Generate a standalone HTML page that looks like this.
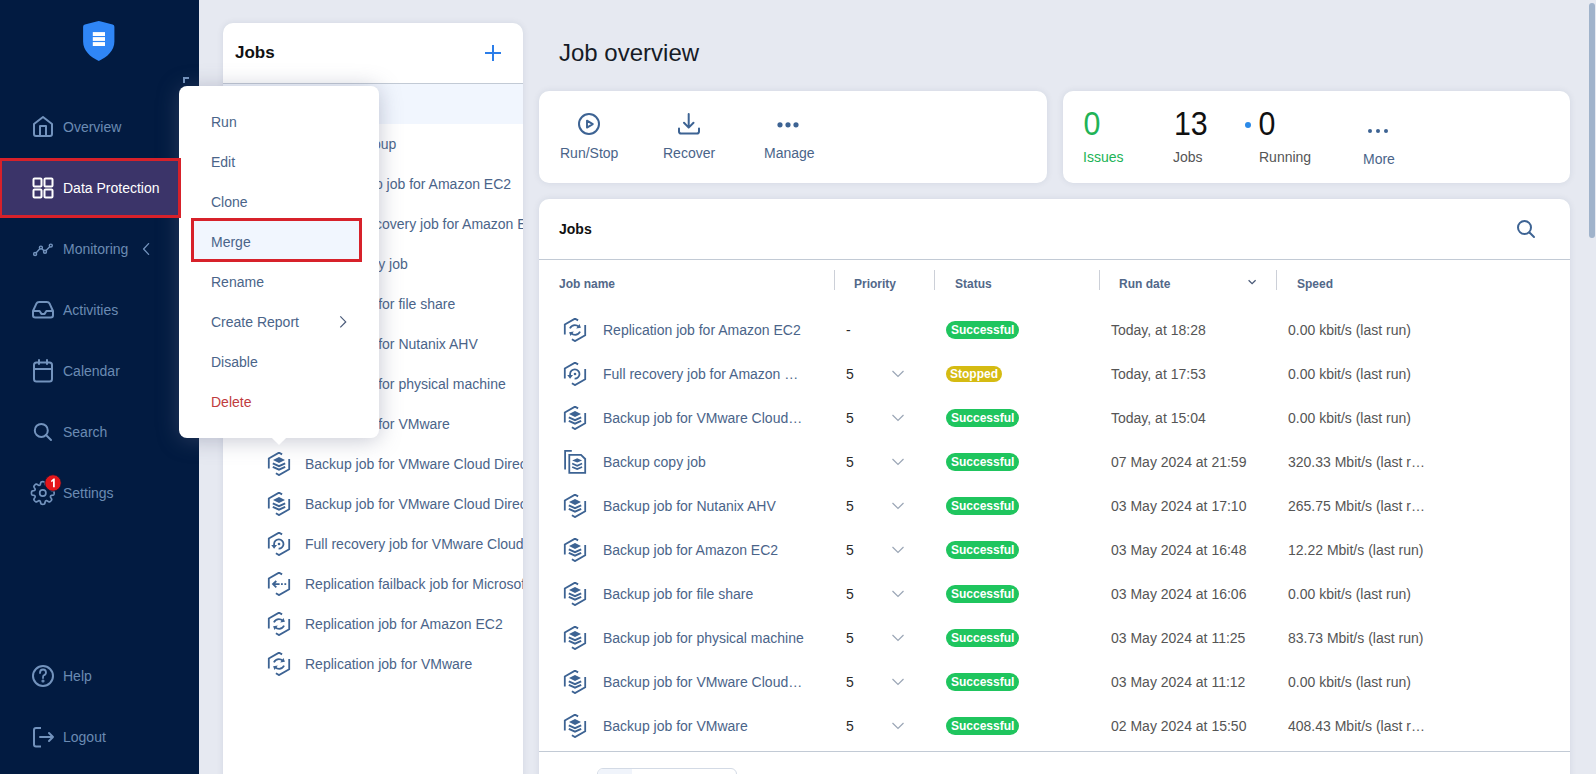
<!DOCTYPE html>
<html><head><meta charset="utf-8">
<style>
*{box-sizing:border-box;margin:0;padding:0}
html,body{width:1596px;height:774px;overflow:hidden;background:#e6e9f1;font-family:"Liberation Sans",sans-serif;position:relative}
.abs{position:absolute}
.side{position:absolute;left:0;top:0;width:199px;height:774px;background:#021b41}
.nav{position:absolute;left:0;width:199px;height:20px;color:#6b8bb3;font-size:14px;line-height:20px}
.nav .t{position:absolute;left:63px;top:0;white-space:nowrap}
.nav svg{position:absolute;left:31px;top:-2px}
.panel{position:absolute;background:#fff;border-radius:10px;box-shadow:0 0 7px rgba(20,40,80,.09)}
.li{position:absolute;left:0;width:300px;height:40px;font-size:14px;color:#4a6489;white-space:nowrap;overflow:hidden}
.li .t{position:absolute;left:82px;top:11px;line-height:18px}
.li svg{position:absolute;left:44px;top:8px}
.menu{position:absolute;left:179px;top:86px;width:200px;height:352px;background:#fff;border-radius:8px;box-shadow:0 2px 22px rgba(100,105,135,.38)}
.mi{position:absolute;left:32px;font-size:14px;color:#4a6489;line-height:18px}
.th{position:absolute;top:277px;font-size:12px;font-weight:bold;color:#526889;line-height:14px;white-space:nowrap}
.sep{position:absolute;top:270px;width:1px;height:20px;background:#ccd0d8}
.row{position:absolute;left:539px;width:1031px;height:44px}
.row .n{position:absolute;left:64px;top:13px;font-size:14px;color:#4a6489;line-height:18px;white-space:nowrap}
.row .p{position:absolute;left:307px;top:13px;font-size:14px;color:#2a2a2a;line-height:18px}
.row .ch{position:absolute;left:352px;top:17px}
.row .b{position:absolute;left:407px;top:13px;height:18px;border-radius:9px;background:#1fc55e;color:#fff;font-size:12px;font-weight:bold;line-height:18px;padding:0 5px 0 5px}
.row .d{position:absolute;left:572px;top:13px;font-size:14px;color:#555;line-height:18px;white-space:nowrap}
.row .s{position:absolute;left:749px;top:13px;font-size:14px;color:#555;line-height:18px;white-space:nowrap}
.row svg.ic{position:absolute;left:24px;top:10px}
.lbl{font-size:14px;color:#4a6489;line-height:18px;white-space:nowrap}
.big{font-size:32px;line-height:36px;transform:scale(0.95,1.04);transform-origin:50% 60%}
.row .b.y{background:#d5bb12;top:14px;height:16px;line-height:16px;padding:0 4px 0 4px;border-radius:8px}
</style></head><body>

<!-- SIDEBAR -->
<div class="side">
  <svg class="abs" style="left:83px;top:20px" width="32" height="42" viewBox="0 0 32 42">
    <path d="M15.8 1.1 Q16.3 1.1 17 1.3 L29.6 4.5 Q31.4 5 31.4 6.8 V21.5 C31.4 30.5 24.5 37 15.8 40.9 C7.1 37 0.1 30.5 0.1 21.5 V6.8 Q0.1 5 1.9 4.5 L14.6 1.3 Q15.3 1.1 15.8 1.1 Z" fill="#2f86f6"/>
    <rect x="9.8" y="12.1" width="12.2" height="3.9" fill="#fff"/><rect x="9.8" y="17.1" width="12.2" height="3.8" fill="#fff"/><rect x="9.8" y="22.1" width="12.2" height="3.9" fill="#fff"/>
  </svg>

  <svg class="abs" style="left:0;top:0" width="199" height="774" viewBox="0 0 199 774" fill="none" stroke="#7393bd" stroke-width="2" stroke-linecap="round" stroke-linejoin="round">
    <!-- corner mark -->
    <path d="M184 83 V78 H189" stroke-linecap="butt" stroke-linejoin="miter"/>
    <!-- house -->
    <path d="M34 124 L43 117 L52 124 V134 Q52 136 50 136 H36 Q34 136 34 134 Z"/>
    <path d="M40 136 V126 H46 V136"/>
    <!-- monitoring -->
    <g stroke-width="1.4"><circle cx="35.1" cy="254" r="1.5"/><circle cx="40.9" cy="247.6" r="1.5"/><circle cx="45" cy="251.8" r="1.5"/><circle cx="50.8" cy="245.6" r="1.5"/>
    <path d="M36.2 252.8 L39.8 248.8 M42 248.7 L43.9 250.7 M46.1 250.6 L49.7 246.8"/></g>
    <path d="M148.6 243.6 L143.6 249 L148.6 254.4" stroke-width="1.3"/>
    <!-- activities -->
    <path d="M33 311 L36.3 303.8 Q37.2 302 39.2 302 H46.8 Q48.8 302 49.7 303.8 L53 311 V315.3 Q53 317.6 50.7 317.6 H35.3 Q33 317.6 33 315.3 Z M33 311 H39.6 L41.4 313.9 H44.6 L46.4 311 H53"/>
    <!-- calendar -->
    <rect x="34" y="362.5" width="18" height="19" rx="2.5"/>
    <path d="M34 369 H52 M39 360 V364 M47 360 V364"/>
    <!-- search -->
    <circle cx="41.3" cy="430.4" r="6.5"/><path d="M46 435 L51 440"/>
    <!-- gear -->
    <path d="M42.80 481.70 L43.10 481.71 L43.39 481.73 L43.68 481.76 L43.97 481.83 L44.26 481.93 L44.52 482.12 L44.76 482.45 L44.94 482.94 L45.07 483.55 L45.18 484.11 L45.31 484.54 L45.46 484.82 L45.63 485.01 L45.82 485.14 L46.01 485.24 L46.22 485.31 L46.45 485.35 L46.70 485.34 L47.01 485.24 L47.40 485.03 L47.88 484.71 L48.40 484.38 L48.88 484.16 L49.27 484.09 L49.59 484.15 L49.87 484.27 L50.12 484.43 L50.35 484.61 L50.58 484.80 L50.79 485.01 L51.00 485.22 L51.19 485.45 L51.37 485.68 L51.53 485.93 L51.65 486.21 L51.71 486.53 L51.64 486.92 L51.42 487.40 L51.09 487.92 L50.77 488.40 L50.56 488.79 L50.46 489.10 L50.45 489.35 L50.49 489.58 L50.56 489.79 L50.66 489.98 L50.79 490.17 L50.98 490.34 L51.26 490.49 L51.69 490.62 L52.25 490.73 L52.86 490.86 L53.35 491.04 L53.68 491.28 L53.87 491.54 L53.97 491.83 L54.04 492.12 L54.07 492.41 L54.09 492.70 L54.10 493.00 L54.09 493.30 L54.07 493.59 L54.04 493.88 L53.97 494.17 L53.87 494.46 L53.68 494.72 L53.35 494.96 L52.86 495.14 L52.25 495.27 L51.69 495.38 L51.26 495.51 L50.98 495.66 L50.79 495.83 L50.66 496.02 L50.56 496.21 L50.49 496.42 L50.45 496.65 L50.46 496.90 L50.56 497.21 L50.77 497.60 L51.09 498.08 L51.42 498.60 L51.64 499.08 L51.71 499.47 L51.65 499.79 L51.53 500.07 L51.37 500.32 L51.19 500.55 L51.00 500.78 L50.79 500.99 L50.58 501.20 L50.35 501.39 L50.12 501.57 L49.87 501.73 L49.59 501.85 L49.27 501.91 L48.88 501.84 L48.40 501.62 L47.88 501.29 L47.40 500.97 L47.01 500.76 L46.70 500.66 L46.45 500.65 L46.22 500.69 L46.01 500.76 L45.82 500.86 L45.63 500.99 L45.46 501.18 L45.31 501.46 L45.18 501.89 L45.07 502.45 L44.94 503.06 L44.76 503.55 L44.52 503.88 L44.26 504.07 L43.97 504.17 L43.68 504.24 L43.39 504.27 L43.10 504.29 L42.80 504.30 L42.50 504.29 L42.21 504.27 L41.92 504.24 L41.63 504.17 L41.34 504.07 L41.08 503.88 L40.84 503.55 L40.66 503.06 L40.53 502.45 L40.42 501.89 L40.29 501.46 L40.14 501.18 L39.97 500.99 L39.78 500.86 L39.59 500.76 L39.38 500.69 L39.15 500.65 L38.90 500.66 L38.59 500.76 L38.20 500.97 L37.72 501.29 L37.20 501.62 L36.72 501.84 L36.33 501.91 L36.01 501.85 L35.73 501.73 L35.48 501.57 L35.25 501.39 L35.02 501.20 L34.81 500.99 L34.60 500.78 L34.41 500.55 L34.23 500.32 L34.07 500.07 L33.95 499.79 L33.89 499.47 L33.96 499.08 L34.18 498.60 L34.51 498.08 L34.83 497.60 L35.04 497.21 L35.14 496.90 L35.15 496.65 L35.11 496.42 L35.04 496.21 L34.94 496.02 L34.81 495.83 L34.62 495.66 L34.34 495.51 L33.91 495.38 L33.35 495.27 L32.74 495.14 L32.25 494.96 L31.92 494.72 L31.73 494.46 L31.63 494.17 L31.56 493.88 L31.53 493.59 L31.51 493.30 L31.50 493.00 L31.51 492.70 L31.53 492.41 L31.56 492.12 L31.63 491.83 L31.73 491.54 L31.92 491.28 L32.25 491.04 L32.74 490.86 L33.35 490.73 L33.91 490.62 L34.34 490.49 L34.62 490.34 L34.81 490.17 L34.94 489.98 L35.04 489.79 L35.11 489.58 L35.15 489.35 L35.14 489.10 L35.04 488.79 L34.83 488.40 L34.51 487.92 L34.18 487.40 L33.96 486.92 L33.89 486.53 L33.95 486.21 L34.07 485.93 L34.23 485.68 L34.41 485.45 L34.60 485.22 L34.81 485.01 L35.02 484.80 L35.25 484.61 L35.48 484.43 L35.73 484.27 L36.01 484.15 L36.33 484.09 L36.72 484.16 L37.20 484.38 L37.72 484.71 L38.20 485.03 L38.59 485.24 L38.90 485.34 L39.15 485.35 L39.38 485.31 L39.59 485.24 L39.78 485.14 L39.97 485.01 L40.14 484.82 L40.29 484.54 L40.42 484.11 L40.53 483.55 L40.66 482.94 L40.84 482.45 L41.08 482.12 L41.34 481.93 L41.63 481.83 L41.92 481.76 L42.21 481.73 L42.50 481.71 Z" stroke-width="1.7"/><circle cx="42.8" cy="493" r="3.1" stroke-width="1.7"/>
    <!-- help -->
    <circle cx="43" cy="676" r="10"/>
    <path d="M40 673 Q40 669.5 43 669.5 Q46 669.5 46 672.5 Q46 674.5 43.5 675.5 Q43 676 43 678" stroke-width="1.8"/>
    <circle cx="43" cy="681" r="0.6" fill="#7393bd"/>
    <!-- logout -->
    <path d="M41 728 H36 Q34 728 34 730 V744.5 Q34 746.5 36 746.5 H41" stroke-linecap="butt"/>
    <path d="M40 737 H53 M49 733 L53 737 L49 741"/>
  </svg>
  <svg class="abs" style="left:44px;top:474px" width="18" height="18" viewBox="0 0 18 18"><circle cx="9" cy="9" r="8.2" fill="#e5161b" stroke="#0d1a3a" stroke-width="0.8"/><path d="M7.2 6.6 L9.6 4.6 H10.8 V13.2 H9 V7.2 L7.2 8.2 Z" fill="#fff"/></svg>
  <div class="abs" style="left:0;top:158px;width:181px;height:60px;background:#3b3469;border:3px solid #d7212a;border-left-width:2px;z-index:5"></div>
  <svg class="abs" style="left:0;top:0;z-index:6" width="199" height="774" viewBox="0 0 199 774" fill="none" stroke="#fff" stroke-width="2">
    <rect x="33.5" y="178.5" width="8" height="8" rx="1"/><rect x="44.5" y="178.5" width="8" height="8" rx="1"/>
    <rect x="33.5" y="189.5" width="8" height="8" rx="1"/><rect x="44.5" y="189.5" width="8" height="8" rx="1"/>
  </svg>
  <div class="nav" style="top:117px"><span class="t">Overview</span></div>
  <div class="nav" style="top:178px;color:#fff;z-index:6;width:170px"><span class="t">Data Protection</span></div>
  <div class="nav" style="top:239px"><span class="t">Monitoring</span></div>
  <div class="nav" style="top:300px"><span class="t">Activities</span></div>
  <div class="nav" style="top:361px"><span class="t">Calendar</span></div>
  <div class="nav" style="top:422px"><span class="t">Search</span></div>
  <div class="nav" style="top:483px"><span class="t">Settings</span></div>
  <div class="nav" style="top:666px"><span class="t">Help</span></div>
  <div class="nav" style="top:727px"><span class="t">Logout</span></div>
</div>


<svg width="0" height="0" style="position:absolute">
 <defs>
  <g id="hex" fill="none" stroke-width="1.8" stroke-linecap="butt" stroke-linejoin="miter">
   <path d="M1.8 16.5 V6.4 L12 0.6 L15.1 2.4"/>
   <path d="M22.2 7.0 V17.2 L12 23.1 L8.9 21.3"/>
  </g>
  <symbol id="i-backup" viewBox="0 0 24 24"><g stroke="currentColor"><use href="#hex"/></g>
   <path d="M6 8 L12 5.1 L18 8 L12 10.9 Z" fill="currentColor"/>
   <path d="M5.8 11.3 L12 14.1 L18.2 11.3 M5.8 14.9 L12 17.7 L18.2 14.9" fill="none" stroke="currentColor" stroke-width="1.9"/>
  </symbol>
  <symbol id="i-repl" viewBox="0 0 24 24"><g stroke="currentColor"><use href="#hex"/></g>
   <path d="M6.9 10.3 Q8.6 7.1 11.8 7.1 Q14.2 7.1 15.6 8.6" fill="none" stroke="currentColor" stroke-width="1.8"/>
   <path d="M13.2 10.6 L16.5 5.9 L17.9 9.7 Z" fill="currentColor"/>
   <path d="M17.1 13.7 Q15.4 16.9 12.2 16.9 Q9.8 16.9 8.4 15.4" fill="none" stroke="currentColor" stroke-width="1.8"/>
   <path d="M10.8 13.4 L7.5 18.1 L6.1 14.3 Z" fill="currentColor"/>
  </symbol>
  <symbol id="i-rec" viewBox="0 0 24 24"><g stroke="currentColor"><use href="#hex"/></g>
   <path d="M11.6 16.7 A4.7 4.7 0 1 0 7.1 12 V13.3" fill="none" stroke="currentColor" stroke-width="1.8"/>
   <path d="M4.2 12.9 H10 L7.1 16.7 Z" fill="currentColor"/>
   <circle cx="12" cy="12" r="1.3" fill="currentColor"/>
  </symbol>
  <symbol id="i-fail" viewBox="0 0 24 24"><g stroke="currentColor"><use href="#hex"/></g>
   <path d="M9.3 9 L6 12.1 L9.3 15.3 M6 12.1 H12.6" fill="none" stroke="currentColor" stroke-width="1.8"/>
   <rect x="14" y="11.2" width="1.8" height="1.8" fill="currentColor"/><rect x="17.4" y="11.2" width="1.8" height="1.8" fill="currentColor"/>
  </symbol>
  <symbol id="i-copy" viewBox="0 0 24 24">
   <path d="M2.1 19.6 V0.8 H8.8 M6.3 22.9 V4.9 H18 L22.2 9 V22.9 Z" fill="none" stroke="currentColor" stroke-width="1.8"/>
   <path d="M9.2 10.4 L14.2 8.2 L19.1 10.4 L14.2 12.6 Z" fill="currentColor"/>
   <path d="M9.2 13.6 L14.2 15.8 L19.1 13.6 M9.2 16.9 L14.2 19.1 L19.1 16.9" fill="none" stroke="currentColor" stroke-width="1.6"/>
  </symbol>
 </defs>
</svg>


<!-- RIGHT -->
<div class="abs" style="left:559px;top:39px;font-size:24px;color:#161b26;line-height:28px;white-space:nowrap">Job overview</div>
<div class="panel" style="left:539px;top:91px;width:508px;height:92px">
  <svg class="abs" style="left:0;top:0" width="508" height="92" viewBox="539 91 508 92" fill="none" stroke="#3d6393" stroke-width="2" stroke-linecap="round" stroke-linejoin="round">
    <circle cx="589" cy="124" r="10"/>
    <path d="M587 120.6 L592.8 124.1 L587 127.6 Z" stroke-width="1.9"/>
    <path d="M688.7 114 V127.5 M684 122.8 L688.7 127.6 L693.5 122.8"/>
    <path d="M679 128.4 V131.4 Q679 133.5 681.2 133.5 H696.8 Q699 133.5 699 131.4 V128.4"/>
    <circle cx="780" cy="124.8" r="1.6" fill="#3d6393"/><circle cx="788" cy="124.8" r="1.6" fill="#3d6393"/><circle cx="796" cy="124.8" r="1.6" fill="#3d6393"/>
  </svg>
  <div class="abs lbl" style="left:21px;top:53px">Run/Stop</div>
  <div class="abs lbl" style="left:124px;top:53px">Recover</div>
  <div class="abs lbl" style="left:225px;top:53px">Manage</div>
</div>
<div class="panel" style="left:1063px;top:91px;width:507px;height:92px">
  <div class="abs big" style="left:20px;top:15px;color:#21b356">0</div>
  <div class="abs lbl" style="left:20px;top:57px;color:#21b356">Issues</div>
  <div class="abs big" style="left:110px;top:15px;color:#111">13</div>
  <div class="abs lbl" style="left:110px;top:57px;color:#555">Jobs</div>
  <div class="abs" style="left:182px;top:31px;width:6px;height:6px;border-radius:50%;background:#2b8ae8"></div>
  <div class="abs big" style="left:195px;top:15px;color:#111">0</div>
  <div class="abs lbl" style="left:196px;top:57px;color:#555">Running</div>
  <svg class="abs" style="left:300px;top:37px" width="30" height="6" viewBox="0 0 30 6"><circle cx="7" cy="3" r="2" fill="#3d6393"/><circle cx="15" cy="3" r="2" fill="#3d6393"/><circle cx="23" cy="3" r="2" fill="#3d6393"/></svg>
  <div class="abs lbl" style="left:300px;top:59px">More</div>
</div>

<!-- JOBS TABLE -->
<div class="panel" style="left:539px;top:199px;width:1031px;height:600px"></div>
<div class="abs" style="left:559px;top:220px;font-size:14px;font-weight:bold;color:#111;line-height:18px">Jobs</div>
<svg class="abs" style="left:1514px;top:217px" width="24" height="24" viewBox="0 0 24 24" fill="none" stroke="#3d6393" stroke-width="2" stroke-linecap="round"><circle cx="10.5" cy="10.5" r="6.5"/><path d="M15.5 15.5 L20 20"/></svg>
<div class="abs" style="left:539px;top:259px;width:1031px;height:1px;background:#c2cad5"></div>
<div class="th" style="left:559px">Job name</div>
<div class="sep" style="left:834px"></div>
<div class="th" style="left:854px">Priority</div>
<div class="sep" style="left:934px"></div>
<div class="th" style="left:955px">Status</div>
<div class="sep" style="left:1099px"></div>
<div class="th" style="left:1119px">Run date</div>
<svg class="abs" style="left:1247px;top:278px" width="10" height="8" viewBox="0 0 10 8"><path d="M1.6 2.3 L5.1 5.6 L8.6 2.3" fill="none" stroke="#4a5a78" stroke-width="1.3"/></svg>
<div class="sep" style="left:1276px"></div>
<div class="th" style="left:1297px">Speed</div>
<div class="row" style="top:308px"><svg class="ic" width="24" height="24" style="color:#3d6393"><use href="#i-repl"/></svg><span class="n">Replication job for Amazon EC2</span><span class="p">-</span><span class="b">Successful</span><span class="d">Today, at 18:28</span><span class="s">0.00 kbit/s (last run)</span></div>
<div class="row" style="top:352px"><svg class="ic" width="24" height="24" style="color:#3d6393"><use href="#i-rec"/></svg><span class="n">Full recovery job for Amazon …</span><span class="p">5</span><svg class="ch" width="14" height="10" viewBox="0 0 14 10"><path d="M1.5 2 L7 7.5 L12.5 2" fill="none" stroke="#9ba6b6" stroke-width="1.2"/></svg><span class="b y">Stopped</span><span class="d">Today, at 17:53</span><span class="s">0.00 kbit/s (last run)</span></div>
<div class="row" style="top:396px"><svg class="ic" width="24" height="24" style="color:#3d6393"><use href="#i-backup"/></svg><span class="n">Backup job for VMware Cloud…</span><span class="p">5</span><svg class="ch" width="14" height="10" viewBox="0 0 14 10"><path d="M1.5 2 L7 7.5 L12.5 2" fill="none" stroke="#9ba6b6" stroke-width="1.2"/></svg><span class="b">Successful</span><span class="d">Today, at 15:04</span><span class="s">0.00 kbit/s (last run)</span></div>
<div class="row" style="top:440px"><svg class="ic" width="24" height="24" style="color:#3d6393"><use href="#i-copy"/></svg><span class="n">Backup copy job</span><span class="p">5</span><svg class="ch" width="14" height="10" viewBox="0 0 14 10"><path d="M1.5 2 L7 7.5 L12.5 2" fill="none" stroke="#9ba6b6" stroke-width="1.2"/></svg><span class="b">Successful</span><span class="d">07 May 2024 at 21:59</span><span class="s">320.33 Mbit/s (last r…</span></div>
<div class="row" style="top:484px"><svg class="ic" width="24" height="24" style="color:#3d6393"><use href="#i-backup"/></svg><span class="n">Backup job for Nutanix AHV</span><span class="p">5</span><svg class="ch" width="14" height="10" viewBox="0 0 14 10"><path d="M1.5 2 L7 7.5 L12.5 2" fill="none" stroke="#9ba6b6" stroke-width="1.2"/></svg><span class="b">Successful</span><span class="d">03 May 2024 at 17:10</span><span class="s">265.75 Mbit/s (last r…</span></div>
<div class="row" style="top:528px"><svg class="ic" width="24" height="24" style="color:#3d6393"><use href="#i-backup"/></svg><span class="n">Backup job for Amazon EC2</span><span class="p">5</span><svg class="ch" width="14" height="10" viewBox="0 0 14 10"><path d="M1.5 2 L7 7.5 L12.5 2" fill="none" stroke="#9ba6b6" stroke-width="1.2"/></svg><span class="b">Successful</span><span class="d">03 May 2024 at 16:48</span><span class="s">12.22 Mbit/s (last run)</span></div>
<div class="row" style="top:572px"><svg class="ic" width="24" height="24" style="color:#3d6393"><use href="#i-backup"/></svg><span class="n">Backup job for file share</span><span class="p">5</span><svg class="ch" width="14" height="10" viewBox="0 0 14 10"><path d="M1.5 2 L7 7.5 L12.5 2" fill="none" stroke="#9ba6b6" stroke-width="1.2"/></svg><span class="b">Successful</span><span class="d">03 May 2024 at 16:06</span><span class="s">0.00 kbit/s (last run)</span></div>
<div class="row" style="top:616px"><svg class="ic" width="24" height="24" style="color:#3d6393"><use href="#i-backup"/></svg><span class="n">Backup job for physical machine</span><span class="p">5</span><svg class="ch" width="14" height="10" viewBox="0 0 14 10"><path d="M1.5 2 L7 7.5 L12.5 2" fill="none" stroke="#9ba6b6" stroke-width="1.2"/></svg><span class="b">Successful</span><span class="d">03 May 2024 at 11:25</span><span class="s">83.73 Mbit/s (last run)</span></div>
<div class="row" style="top:660px"><svg class="ic" width="24" height="24" style="color:#3d6393"><use href="#i-backup"/></svg><span class="n">Backup job for VMware Cloud…</span><span class="p">5</span><svg class="ch" width="14" height="10" viewBox="0 0 14 10"><path d="M1.5 2 L7 7.5 L12.5 2" fill="none" stroke="#9ba6b6" stroke-width="1.2"/></svg><span class="b">Successful</span><span class="d">03 May 2024 at 11:12</span><span class="s">0.00 kbit/s (last run)</span></div>
<div class="row" style="top:704px"><svg class="ic" width="24" height="24" style="color:#3d6393"><use href="#i-backup"/></svg><span class="n">Backup job for VMware</span><span class="p">5</span><svg class="ch" width="14" height="10" viewBox="0 0 14 10"><path d="M1.5 2 L7 7.5 L12.5 2" fill="none" stroke="#9ba6b6" stroke-width="1.2"/></svg><span class="b">Successful</span><span class="d">02 May 2024 at 15:50</span><span class="s">408.43 Mbit/s (last r…</span></div>
<div class="abs" style="left:539px;top:751px;width:1031px;height:1px;background:#c2cad5"></div>
<div class="abs" style="left:597px;top:768px;width:140px;height:20px;border:1px solid #d3dae5;border-radius:6px;background:#fff;overflow:hidden"><div class="abs" style="left:0;top:0;width:34px;height:20px;background:#f0f4fb"></div></div>
<div class="abs" style="left:1589px;top:3px;width:6px;height:235px;border-radius:3px;background:#a0b3cb"></div>
<!-- JOBS LIST PANEL -->
<div class="panel" style="left:223px;top:23px;width:300px;height:780px;overflow:hidden">
  <div class="abs" style="left:12px;top:20px;font-size:17px;font-weight:bold;color:#111;line-height:20px">Jobs</div>
  <svg class="abs" style="left:261px;top:21px" width="18" height="18" viewBox="0 0 18 18"><path d="M9 1 V17 M1 9 H17" stroke="#2b7de9" stroke-width="2"/></svg>
  <div class="abs" style="left:0;top:60px;width:300px;height:1px;background:#c2cad5"></div>
  <div class="abs" style="left:0;top:61px;width:300px;height:40px;background:#f1f6fe"></div>
    <div class="li" style="top:61px"><svg width="24" height="24" style="color:#3d6393"><use href="#i-backup"/></svg><span class="t">All jobs</span></div>
  <div class="li" style="top:101px"><svg width="24" height="24" style="color:#3d6393"><use href="#i-backup"/></svg><span class="t" style="left:87px">Backup group</span></div>
  <div class="li" style="top:141px"><svg width="24" height="24" style="color:#3d6393;left:75px"><use href="#i-backup"/></svg><span class="t" style="left:113px">Backup job for Amazon EC2</span></div>
  <div class="li" style="top:181px"><svg width="24" height="24" style="color:#3d6393;left:75px"><use href="#i-rec"/></svg><span class="t" style="left:113px">Full recovery job for Amazon EC2</span></div>
  <div class="li" style="top:221px"><svg width="24" height="24" style="color:#3d6393"><use href="#i-copy"/></svg><span class="t">Backup copy job</span></div>
  <div class="li" style="top:261px"><svg width="24" height="24" style="color:#3d6393"><use href="#i-backup"/></svg><span class="t">Backup job for file share</span></div>
  <div class="li" style="top:301px"><svg width="24" height="24" style="color:#3d6393"><use href="#i-backup"/></svg><span class="t">Backup job for Nutanix AHV</span></div>
  <div class="li" style="top:341px"><svg width="24" height="24" style="color:#3d6393"><use href="#i-backup"/></svg><span class="t">Backup job for physical machine</span></div>
  <div class="li" style="top:381px"><svg width="24" height="24" style="color:#3d6393"><use href="#i-backup"/></svg><span class="t">Backup job for VMware</span></div>
  <div class="li" style="top:421px"><svg width="24" height="24" style="color:#3d6393"><use href="#i-backup"/></svg><span class="t">Backup job for VMware Cloud Director</span></div>
  <div class="li" style="top:461px"><svg width="24" height="24" style="color:#3d6393"><use href="#i-backup"/></svg><span class="t">Backup job for VMware Cloud Director 2</span></div>
  <div class="li" style="top:501px"><svg width="24" height="24" style="color:#3d6393"><use href="#i-rec"/></svg><span class="t">Full recovery job for VMware Cloud Director</span></div>
  <div class="li" style="top:541px"><svg width="24" height="24" style="color:#3d6393"><use href="#i-fail"/></svg><span class="t">Replication failback job for Microsoft Hyper-V</span></div>
  <div class="li" style="top:581px"><svg width="24" height="24" style="color:#3d6393"><use href="#i-repl"/></svg><span class="t">Replication job for Amazon EC2</span></div>
  <div class="li" style="top:621px"><svg width="24" height="24" style="color:#3d6393"><use href="#i-repl"/></svg><span class="t">Replication job for VMware</span></div>

</div>

<!-- CONTEXT MENU -->
<div class="menu">
  <div class="mi" style="top:27px">Run</div>
  <div class="mi" style="top:67px">Edit</div>
  <div class="mi" style="top:107px">Clone</div>
  <div class="abs" style="left:12px;top:132px;width:171px;height:44px;background:#f1f6fe;border:3px solid #d7212a"></div>
  <div class="mi" style="top:147px">Merge</div>
  <div class="mi" style="top:187px">Rename</div>
  <div class="mi" style="top:227px">Create Report</div>
  <svg class="abs" style="left:159px;top:228px" width="10" height="16" viewBox="0 0 10 16"><path d="M2.3 2.4 L7.7 7.9 L2.3 13.4" fill="none" stroke="#4a5b7a" stroke-width="1.25"/></svg>
  <div class="mi" style="top:267px">Disable</div>
  <div class="mi" style="top:307px;color:#bf3b3e">Delete</div>
  <div class="abs" style="left:95px;top:347px;width:10px;height:10px;background:#fff;transform:rotate(45deg)"></div>
</div>
</body></html>
